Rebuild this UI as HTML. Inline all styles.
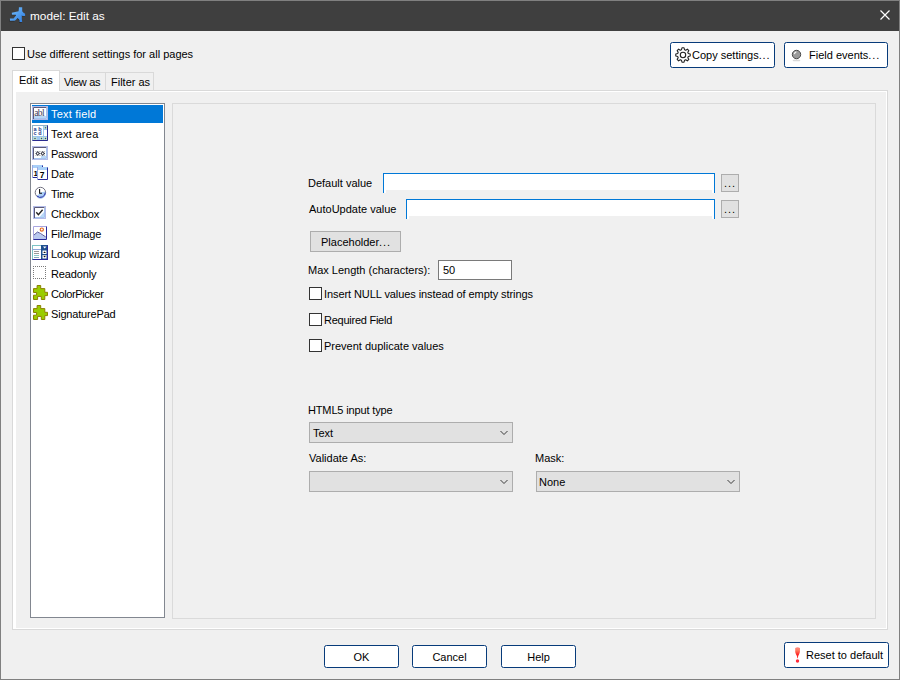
<!DOCTYPE html>
<html><head><meta charset="utf-8">
<style>
*{box-sizing:border-box;margin:0;padding:0}
html,body{width:900px;height:680px;overflow:hidden;background:#f0f0f0}
body{position:relative;font-family:"Liberation Sans",sans-serif;font-size:11px;color:#000}
.a{position:absolute}
.t{position:absolute;white-space:pre;line-height:13px;font-size:11px}
#win{position:absolute;left:0;top:0;width:900px;height:680px;border:1px solid #808080;background:#f0f0f0}
#title{position:absolute;left:1px;top:1px;width:898px;height:30px;background:#3f3f3f}
.btn{position:absolute;border:1px solid #073b7a;border-radius:2.5px;background:#fff}
.gbtn{position:absolute;border:1px solid #adadad;background:#e1e1e1}
.cb{position:absolute;width:13px;height:13px;border:1px solid #333;background:#fff}
.combo{position:absolute;border:1px solid #adadad;background:#e1e1e1}
.chev{position:absolute;width:8px;height:6px}
</style></head><body>
<div id="win"></div>
<div id="title"></div>
<!-- title icon -->
<svg class="a" style="left:6px;top:4px" width="22" height="22" viewBox="0 0 22 22">
  <defs><linearGradient id="rg" x1="0" y1="0" x2="1" y2="1"><stop offset="0" stop-color="#7cc4ff"/><stop offset="1" stop-color="#2a78dc"/></linearGradient></defs>
  <path d="M12.9 3.2 L16.2 3.2 L16.2 7.2 L17.5 8.7 L19.1 9.7 L19.1 12 L16.5 12 L15.8 11.3 L15.8 15 L16.2 18.1 L13.5 18.1 L13.5 16 L11.6 14 L9.5 16.2 L8.6 16.8 L3.9 16.8 L3.9 14.6 L7.5 14.6 L10 11.5 L9.7 10.7 L5.8 10.7 L5.8 8.7 L8 8.2 L12.5 7.2 Z" fill="#1a1a1a" opacity="0.6" transform="translate(-0.5,0.6)"/>
  <path d="M12.9 3.2 L16.2 3.2 L16.2 7.2 L17.5 8.7 L19.1 9.7 L19.1 12 L16.5 12 L15.8 11.3 L15.8 15 L16.2 18.1 L13.5 18.1 L13.5 16 L11.6 14 L9.5 16.2 L8.6 16.8 L3.9 16.8 L3.9 14.6 L7.5 14.6 L10 11.5 L9.7 10.7 L5.8 10.7 L5.8 8.7 L8 8.2 L12.5 7.2 Z" fill="url(#rg)"/>
</svg>
<div class="t" style="left:30px;top:9px;color:#fff;font-size:11.8px;line-height:14px">model: Edit as</div>
<!-- close X -->
<svg class="a" style="left:879px;top:9px" width="12" height="12" viewBox="0 0 12 12">
  <path d="M1.5 1.5 L10.5 10.5 M10.5 1.5 L1.5 10.5" stroke="#fff" stroke-width="1.2"/>
</svg>

<!-- top checkbox -->
<div class="cb" style="left:12px;top:47px"></div>
<div class="t" style="left:27px;top:48px">Use different settings for all pages</div>

<!-- copy settings button -->
<div class="btn" style="left:670px;top:42px;width:105px;height:26px"></div>
<svg class="a" style="left:673px;top:45px" width="20" height="20" viewBox="0 0 20 20">
  <circle cx="10" cy="10" r="2.7" fill="none" stroke="#222" stroke-width="1.1"/>
  <path d="M8.48 4.71 L8.98 2.77 L11.02 2.77 L11.52 4.71 L12.67 5.19 L14.39 4.17 L15.83 5.61 L14.81 7.33 L15.29 8.48 L17.23 8.98 L17.23 11.02 L15.29 11.52 L14.81 12.67 L15.83 14.39 L14.39 15.83 L12.67 14.81 L11.52 15.29 L11.02 17.23 L8.98 17.23 L8.48 15.29 L7.33 14.81 L5.61 15.83 L4.17 14.39 L5.19 12.67 L4.71 11.52 L2.77 11.02 L2.77 8.98 L4.71 8.48 L5.19 7.33 L4.17 5.61 L5.61 4.17 L7.33 5.19 Z" fill="none" stroke="#222" stroke-width="1.1" stroke-linejoin="round"/>
</svg>
<div class="t" style="left:692px;top:49px">Copy settings<span style="letter-spacing:0.9px">...</span></div>

<!-- field events button -->
<div class="btn" style="left:784px;top:42px;width:104px;height:26px"></div>
<svg class="a" style="left:790px;top:48px" width="13" height="14" viewBox="0 0 13 14">
  <ellipse cx="6.5" cy="12.4" rx="3.8" ry="0.9" fill="#d8d8d8"/>
  <circle cx="6.5" cy="6.5" r="4.2" fill="#9a9a9a" stroke="#4a4a4a" stroke-width="1"/>
  <path d="M4.3 6.2 Q4.6 4.4 6.3 3.9" stroke="#f4f4f4" stroke-width="1.2" fill="none"/>
</svg>
<div class="t" style="left:809px;top:49px">Field events<span style="letter-spacing:0.9px">...</span></div>

<!-- tabs -->
<div class="a" style="left:12px;top:90px;width:876px;height:540px;border:1px solid #d9d9d9;background:#fff"></div>
<div class="a" style="left:16px;top:92px;width:870px;height:536px;background:#f0f0f0"></div>
<div class="a" style="left:59px;top:72px;width:47px;height:19px;border:1px solid #d9d9d9;background:#f0f0f0"></div>
<div class="a" style="left:105px;top:72px;width:49px;height:19px;border:1px solid #d9d9d9;background:#f0f0f0"></div>
<div class="a" style="left:12px;top:70px;width:48px;height:22px;border:1px solid #d9d9d9;border-bottom:none;background:#fff"></div>
<div class="t" style="left:19px;top:74px">Edit as</div>
<div class="t" style="left:64px;top:76px;letter-spacing:-0.3px">View as</div>
<div class="t" style="left:111px;top:76px">Filter as</div>
<div class="a" style="left:59px;top:91px;width:1px;height:1px;background:#fff"></div>

<!-- listbox -->
<div class="a" style="left:30px;top:103px;width:135px;height:515px;border:1px solid #828790;background:#fff"></div>
<div class="a" style="left:32px;top:105px;width:131px;height:18px;background:#0078d7"></div>
<svg class="a" style="left:31px;top:104px" width="18" height="18" viewBox="0 0 18 18"><rect x="1" y="2" width="16" height="14" fill="#b3bbe8"/>
<rect x="2" y="3" width="14" height="12" fill="#fff"/><path d="M2.5 15 V3.5 H15.5" fill="none" stroke="#5a5a78" stroke-width="1"/><path d="M15.5 4 V14.5 H3" fill="none" stroke="#a6c4ee" stroke-width="1"/>
<rect x="3" y="12" width="12" height="2" fill="#b9d8f8"/>
<text x="3.2" y="12.3" font-family="Liberation Serif" font-size="9.5" fill="#3c3c5c" letter-spacing="-0.6">abl</text></svg>
<svg class="a" style="left:31px;top:124px" width="18" height="18" viewBox="0 0 18 18"><rect x="1" y="1" width="16" height="16" fill="#9ec7ef"/>
<rect x="1.5" y="1.5" width="15" height="15" fill="none" stroke="#8fb0c8" stroke-width="1"/>
<path d="M16.5 1.5 V16.5 H1.5" fill="none" stroke="#2a2a90" stroke-width="1"/>
<rect x="2" y="2" width="10" height="10" fill="#fff"/>
<text x="2.6" y="6.8" font-family="Liberation Sans" font-size="5.5" font-weight="bold" fill="#1e3c8c">a b</text>
<text x="2.6" y="11.3" font-family="Liberation Sans" font-size="5.5" font-weight="bold" fill="#1e3c8c">c d</text>
<rect x="13" y="2.5" width="3" height="2.5" fill="#d8f0c8"/><rect x="13.8" y="3.2" width="1.4" height="1.2" fill="#1e4c8c"/>
<rect x="13" y="6" width="3" height="6" fill="#fff"/>
<rect x="2.5" y="13" width="3" height="3" fill="#d8f0c8"/><rect x="3.3" y="13.8" width="1.4" height="1.4" fill="#1e4c8c"/>
<rect x="9" y="13" width="3" height="3" fill="#d8f0c8"/><rect x="9.8" y="13.8" width="1.4" height="1.4" fill="#1e4c8c"/>
<rect x="13" y="13" width="3" height="3" fill="#d8f0c8"/><rect x="13.8" y="13.8" width="1.4" height="1.4" fill="#1e4c8c"/></svg>
<svg class="a" style="left:31px;top:144px" width="18" height="18" viewBox="0 0 18 18"><rect x="1" y="2" width="16" height="14" fill="#b3bbe8"/>
<rect x="2" y="3" width="14" height="12" fill="#fff"/><path d="M2.5 15 V3.5 H15.5" fill="none" stroke="#5a5a78" stroke-width="1"/><path d="M15.5 4 V14.5 H3" fill="none" stroke="#a6c4ee" stroke-width="1"/>
<rect x="10" y="12" width="5" height="2" fill="#b9d8f8"/>
<path d="M4.5 9.5 H9 M6.75 7 V12 M5 7.6 L8.5 11.4 M8.5 7.6 L5 11.4 M9.5 9.5 H14 M11.75 7 V12 M10 7.6 L13.5 11.4 M13.5 7.6 L10 11.4" stroke="#2a2a3a" stroke-width="0.9"/><circle cx="6.75" cy="9.5" r="0.8" fill="#fff"/><circle cx="11.75" cy="9.5" r="0.8" fill="#fff"/></svg>
<svg class="a" style="left:31px;top:164px" width="18" height="18" viewBox="0 0 18 18"><rect x="1" y="1" width="11" height="13" fill="#fff"/>
<rect x="1" y="1" width="11" height="3" fill="#a8d0f8"/>
<path d="M11.5 1.5 V13.5 H1.5" fill="none" stroke="#2a2a9a" stroke-width="1"/>
<rect x="1" y="1" width="1" height="13" fill="#9aa8e0"/>
<text x="2.5" y="11.5" font-family="Liberation Sans" font-size="8" font-weight="bold" fill="#000">1</text>
<rect x="6" y="3" width="11" height="13" fill="#fff"/>
<rect x="6" y="3" width="11" height="3" fill="#a8d0f8"/>
<path d="M16.5 3.5 V15.5 H6.5" fill="none" stroke="#2a2a9a" stroke-width="1"/>
<rect x="6" y="3" width="1" height="13" fill="#9aa8e0"/>
<text x="8.8" y="14.2" font-family="Liberation Sans" font-size="8.5" font-weight="bold" fill="#000">7</text></svg>
<svg class="a" style="left:31px;top:184px" width="18" height="18" viewBox="0 0 18 18"><circle cx="9.4" cy="8.5" r="5.2" fill="#fff" stroke="#707080" stroke-width="1"/>
<path d="M14.1 7.5 A5 5 0 0 1 5.5 12.5 L9.4 8.5 Z" fill="#a9cdf5"/>
<path d="M14.3 8.5 A4.9 4.9 0 0 1 6 12" fill="none" stroke="#2828a0" stroke-width="1"/>
<path d="M8.6 5 V9.2 H11" fill="none" stroke="#111" stroke-width="1.1"/></svg>
<svg class="a" style="left:31px;top:204px" width="18" height="18" viewBox="0 0 18 18"><rect x="2" y="2" width="13" height="13" fill="#b3bbe8"/>
<rect x="3" y="3" width="11" height="11" fill="#fff"/><path d="M3.5 14 V3.5 H13.5" fill="none" stroke="#5a5a78" stroke-width="1"/><path d="M13.5 4 V13.5 H4" fill="none" stroke="#a6c4ee" stroke-width="1"/>
<path d="M13 8 L13 13 L8.5 13 Z" fill="#b9d8f8"/>
<path d="M5.3 8.3 L7.4 10.6 L11.6 5.8" fill="none" stroke="#222" stroke-width="1.4"/></svg>
<svg class="a" style="left:31px;top:224px" width="18" height="18" viewBox="0 0 18 18"><rect x="2" y="2" width="14" height="14" fill="#fff"/>
<path d="M2.5 16 V2.5 H15.5" fill="none" stroke="#a9a6e0" stroke-width="1"/>
<path d="M15.5 2.5 V15.5 H2.5" fill="none" stroke="#2a2a9a" stroke-width="1"/>
<path d="M3 11 L6.5 8 L10 10.5 L15 13.5 L15 15 L3 15 Z" fill="#b8c8f0"/>
<path d="M3 11 L6.5 8 L9.5 9.5 L14.8 13" fill="none" stroke="#4a4a90" stroke-width="0.9"/>
<circle cx="10.8" cy="5.6" r="1.6" fill="#fff" stroke="#e86a20" stroke-width="1.2"/></svg>
<svg class="a" style="left:31px;top:244px" width="18" height="18" viewBox="0 0 18 18"><rect x="1" y="1" width="16" height="15" fill="#fff"/>
<rect x="1.5" y="1.5" width="9" height="14" fill="none" stroke="#7cc4c4" stroke-width="1"/>
<rect x="1" y="5" width="9" height="1" fill="#90a8d8"/>
<rect x="3" y="7" width="5" height="1" fill="#999"/>
<rect x="3" y="9" width="5" height="1" fill="#999"/>
<rect x="3" y="11" width="5" height="1" fill="#8cc"/>
<rect x="3" y="13" width="5" height="1" fill="#8ab"/>
<rect x="10" y="1" width="7" height="15" fill="#1e4f8f"/>
<path d="M1.5 15.5 H16.5 V1.5" fill="none" stroke="#2a2a9a" stroke-width="1"/>
<path d="M12 2.5 H15.5 L13.7 4.5 Z" fill="#fff"/>
<rect x="11.5" y="6.5" width="4" height="3.5" fill="#fff"/><path d="M12.2 9 L13.6 7.4 L15 9 Z" fill="#111"/>
<rect x="11.5" y="11" width="4" height="3.5" fill="#fff"/><path d="M12.2 11.8 L15 11.8 L13.6 13.6 Z" fill="#111"/></svg>
<svg class="a" style="left:31px;top:264px" width="18" height="18" viewBox="0 0 18 18"><rect x="2" y="2" width="1" height="1" fill="#7a7a7a"/><rect x="2" y="4" width="1" height="1" fill="#7a7a7a"/><rect x="2" y="6" width="1" height="1" fill="#7a7a7a"/><rect x="2" y="8" width="1" height="1" fill="#7a7a7a"/><rect x="2" y="10" width="1" height="1" fill="#7a7a7a"/><rect x="2" y="12" width="1" height="1" fill="#7a7a7a"/><rect x="2" y="14" width="1" height="1" fill="#7a7a7a"/><rect x="4" y="2" width="1" height="1" fill="#7a7a7a"/><rect x="4" y="14" width="1" height="1" fill="#7a7a7a"/><rect x="6" y="2" width="1" height="1" fill="#7a7a7a"/><rect x="6" y="14" width="1" height="1" fill="#7a7a7a"/><rect x="8" y="2" width="1" height="1" fill="#7a7a7a"/><rect x="8" y="14" width="1" height="1" fill="#7a7a7a"/><rect x="10" y="2" width="1" height="1" fill="#7a7a7a"/><rect x="10" y="14" width="1" height="1" fill="#7a7a7a"/><rect x="12" y="2" width="1" height="1" fill="#7a7a7a"/><rect x="12" y="14" width="1" height="1" fill="#7a7a7a"/><rect x="14" y="2" width="1" height="1" fill="#7a7a7a"/><rect x="14" y="4" width="1" height="1" fill="#7a7a7a"/><rect x="14" y="6" width="1" height="1" fill="#7a7a7a"/><rect x="14" y="8" width="1" height="1" fill="#7a7a7a"/><rect x="14" y="10" width="1" height="1" fill="#7a7a7a"/><rect x="14" y="12" width="1" height="1" fill="#7a7a7a"/><rect x="14" y="14" width="1" height="1" fill="#7a7a7a"/></svg>
<svg class="a" style="left:31px;top:284px" width="18" height="18" viewBox="0 0 18 18"><path d="M6.1 1.5 L9.7 1.5 L9.7 4.6 L13.8 4.6 L13.8 8.3 L16.5 8.3 L16.5 11.6 L13.8 11.6 L13.8 15.5 L10.3 15.5 L10.3 12.4 L6.6 12.4 L6.6 15.5 L2.5 15.5 L2.5 11.2 L5.6 11.2 L5.6 8.5 L2.5 8.5 L2.5 4.6 L6.1 4.6 Z" fill="#99cc00" stroke="#8c8200" stroke-width="1" stroke-linejoin="miter"/></svg>
<svg class="a" style="left:31px;top:304px" width="18" height="18" viewBox="0 0 18 18"><path d="M6.1 1.5 L9.7 1.5 L9.7 4.6 L13.8 4.6 L13.8 8.3 L16.5 8.3 L16.5 11.6 L13.8 11.6 L13.8 15.5 L10.3 15.5 L10.3 12.4 L6.6 12.4 L6.6 15.5 L2.5 15.5 L2.5 11.2 L5.6 11.2 L5.6 8.5 L2.5 8.5 L2.5 4.6 L6.1 4.6 Z" fill="#99cc00" stroke="#8c8200" stroke-width="1" stroke-linejoin="miter"/></svg>
<div class="t" style="left:51px;top:108px;color:#fff;letter-spacing:0.2px">Text field</div>
<div class="t" style="left:51px;top:128px;color:#000;letter-spacing:0.25px">Text area</div>
<div class="t" style="left:51px;top:148px;color:#000;letter-spacing:-0.28px">Password</div>
<div class="t" style="left:51px;top:168px;color:#000;letter-spacing:0px">Date</div>
<div class="t" style="left:51px;top:188px;color:#000;letter-spacing:-0.3px">Time</div>
<div class="t" style="left:51px;top:208px;color:#000;letter-spacing:-0.1px">Checkbox</div>
<div class="t" style="left:51px;top:228px;color:#000;letter-spacing:-0.1px">File/Image</div>
<div class="t" style="left:51px;top:248px;color:#000;letter-spacing:-0.17px">Lookup wizard</div>
<div class="t" style="left:51px;top:268px;color:#000;letter-spacing:-0.14px">Readonly</div>
<div class="t" style="left:51px;top:288px;color:#000;letter-spacing:-0.4px">ColorPicker</div>
<div class="t" style="left:51px;top:308px;color:#000;letter-spacing:-0.18px">SignaturePad</div>

<!-- right panel -->
<div class="a" style="left:172px;top:103px;width:704px;height:516px;border:1px solid #dadada;background:#f0f0f0"></div>

<!-- form -->
<div class="t" style="left:308px;top:177px">Default value</div>
<div class="a" style="left:383px;top:173px;width:332px;height:20px;border:1px solid #0078d7;border-bottom:none;background:#fff"></div>
<div class="a" style="left:386px;top:190px;width:326px;height:3px;background:#f0f0f0"></div>
<div class="gbtn" style="left:721px;top:174px;width:18px;height:18px"></div>
<div class="t" style="left:724px;top:177px;letter-spacing:1px">...</div>
<div class="t" style="left:309px;top:203px">AutoUpdate value</div>
<div class="a" style="left:406px;top:199px;width:309px;height:20px;border:1px solid #0078d7;border-bottom:none;background:#fff"></div>
<div class="a" style="left:409px;top:216px;width:303px;height:3px;background:#f0f0f0"></div>
<div class="gbtn" style="left:721px;top:200px;width:18px;height:18px"></div>
<div class="t" style="left:724px;top:203px;letter-spacing:1px">...</div>
<div class="gbtn" style="left:310px;top:231px;width:91px;height:21px"></div>
<div class="t" style="left:321px;top:236px">Placeholder<span style="letter-spacing:0.9px">...</span></div>
<div class="t" style="left:308px;top:264px">Max Length (characters):</div>
<div class="a" style="left:438px;top:260px;width:74px;height:20px;border:1px solid #7a7a7a;background:#fff"></div>
<div class="t" style="left:443px;top:264px">50</div>
<div class="cb" style="left:309px;top:287px"></div>
<div class="t" style="left:324px;top:288px;letter-spacing:-0.08px">Insert NULL values instead of empty strings</div>
<div class="cb" style="left:309px;top:313px"></div>
<div class="t" style="left:324px;top:314px;letter-spacing:-0.25px">Required Field</div>
<div class="cb" style="left:309px;top:339px"></div>
<div class="t" style="left:324px;top:340px">Prevent duplicate values</div>
<div class="t" style="left:308px;top:404px;letter-spacing:-0.15px">HTML5 input type</div>
<div class="combo" style="left:309px;top:422px;width:204px;height:21px"></div>
<div class="t" style="left:313px;top:427px">Text</div>
<svg class="chev" style="left:500px;top:430px" width="8" height="6" viewBox="0 0 8 6"><path d="M0.5 1 L4 4.5 L7.5 1" fill="none" stroke="#3a3a3a" stroke-width="1"/></svg>
<div class="t" style="left:309px;top:452px">Validate As:</div>
<div class="combo" style="left:309px;top:471px;width:204px;height:21px"></div>
<svg class="chev" style="left:500px;top:479px" width="8" height="6" viewBox="0 0 8 6"><path d="M0.5 1 L4 4.5 L7.5 1" fill="none" stroke="#3a3a3a" stroke-width="1"/></svg>
<div class="t" style="left:535px;top:452px">Mask:</div>
<div class="combo" style="left:536px;top:471px;width:204px;height:21px"></div>
<div class="t" style="left:539px;top:476px">None</div>
<svg class="chev" style="left:727px;top:479px" width="8" height="6" viewBox="0 0 8 6"><path d="M0.5 1 L4 4.5 L7.5 1" fill="none" stroke="#3a3a3a" stroke-width="1"/></svg>

<!-- bottom buttons -->
<div class="btn" style="left:324px;top:645px;width:75px;height:23px"></div>
<div class="t" style="left:324px;top:651px;width:75px;text-align:center">OK</div>
<div class="btn" style="left:412px;top:645px;width:75px;height:23px"></div>
<div class="t" style="left:412px;top:651px;width:75px;text-align:center">Cancel</div>
<div class="btn" style="left:501px;top:645px;width:75px;height:23px"></div>
<div class="t" style="left:501px;top:651px;width:75px;text-align:center">Help</div>
<div class="btn" style="left:784px;top:642px;width:105px;height:26px"></div>
<svg class="a" style="left:789px;top:644px" width="16" height="22" viewBox="0 0 16 22">
  <defs><linearGradient id="exg" x1="0" y1="0" x2="0" y2="1"><stop offset="0" stop-color="#ff8a80"/><stop offset="0.3" stop-color="#ff7a60"/><stop offset="0.7" stop-color="#ff1e1e"/><stop offset="1" stop-color="#ff3030"/></linearGradient></defs>
  <path d="M6.2 4 Q8.6 2.6 11 4 L10.9 8 Q10.2 10.5 9.2 12 L8.8 14.2 L8.3 14.2 L7.9 12 Q6.8 10.5 6.2 8 Z" fill="url(#exg)"/>
  <circle cx="8.5" cy="17" r="1.7" fill="#ff2a3a"/>
</svg>
<div class="t" style="left:806px;top:649px">Reset to default</div>

</body></html>
